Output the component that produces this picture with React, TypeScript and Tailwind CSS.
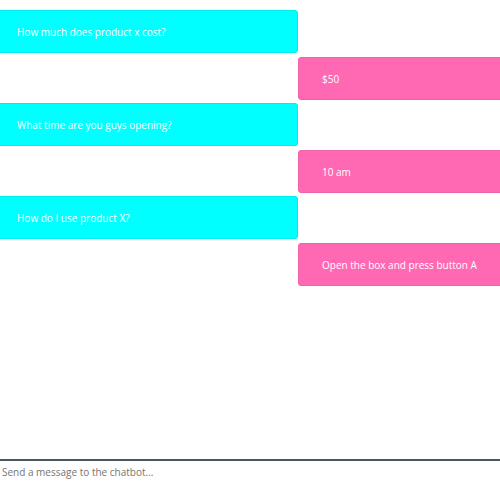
import React from "react";

const msgs: { from: "user" | "bot"; text: string }[] = [
  { from: "user", text: "How much does product x cost?" },
  { from: "bot", text: "$50" },
  { from: "user", text: "What time are you guys opening?" },
  { from: "bot", text: "10 am" },
  { from: "user", text: "How do I use product X?" },
  { from: "bot", text: "Open the box and press button A" },
];

export default function App() {
  return (
    <div
      className="h-[499px] w-[500px] overflow-hidden flex flex-col bg-white"
      style={{ fontFamily: '"Open Sans", "Noto Sans", sans-serif' }}
    >
      <div className="flex-1 flex flex-col gap-[3.5px] pt-[10px]">
        {msgs.map((m, i) =>
          m.from === "user" ? (
            <div
              key={i}
              className="-ml-[4px] w-[302px] h-[43px] flex items-center bg-[#00ffff] border border-[#00eded] rounded-[3px] pl-[20px] pt-[2px] text-[10px] text-white"
            >
              {m.text}
            </div>
          ) : (
            <div
              key={i}
              className="ml-[298px] w-[206px] h-[43px] flex items-center bg-[#ff69b4] border border-[#f262aa] rounded-[3px] pl-[23px] pt-[2px] text-[10px] text-white"
            >
              {m.text}
            </div>
          )
        )}
      </div>
      <div className="h-[40px] border-t-2 border-[#4b5563] flex items-start">
        <input
          className="w-full h-[22px] pl-[2px] text-[10px] outline-none placeholder:text-[#757575] bg-white"
          placeholder="Send a message to the chatbot..."
        />
      </div>
    </div>
  );
}
